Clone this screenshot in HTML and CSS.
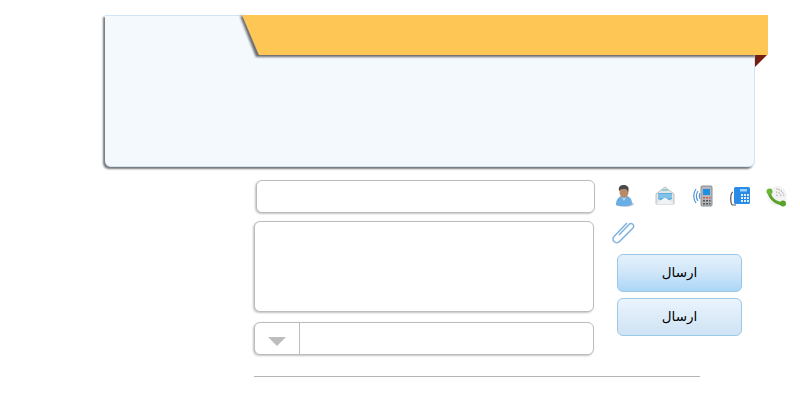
FILE: index.html
```html
<!DOCTYPE html>
<html lang="fa">
<head>
<meta charset="utf-8">
<title>فرم</title>
<link rel="stylesheet" href="styles.css">
</head>
<body>
<div class="page">
  <section class="panel">
    <div class="ribbon-fold"></div>
    <svg class="ribbon" width="526" height="44" viewBox="0 0 526 44">
      <defs><filter id="rs" x="-5%" y="-20%" width="110%" height="150%"><feGaussianBlur stdDeviation="1"/></filter></defs>
      <path d="M-2 1 L14 42 H513 V38 H17 L2 1 Z" fill="#67686b" filter="url(#rs)"/>
      <path d="M0 0 H526 V40 H17 Z" fill="#fec755"/>
    </svg>
  </section>
  <div class="form">
    <div class="fields">
      <input class="field field-text" type="text" aria-label="name">
      <textarea class="field field-area" aria-label="message"></textarea>
      <div class="field field-select">
        <span class="select-btn"><span class="caret"></span></span>
        <span class="select-value"></span>
      </div>
    </div>
    <div class="side">
      <div class="icons">
        <svg width="22" height="24" viewBox="0 0 22 24"><ellipse cx="11" cy="20" rx="9" ry="3" fill="#c9ccd0"/><path d="M2 21c0-6 3-8 5-9l3 2 3-2c3 1 5 3 5 8-2 2-4 2-8 2s-6 0-8-1z" fill="#6aaee6"/><path d="M7 12l3 5 3-5z" fill="#b7d8f3"/><ellipse cx="10" cy="8" rx="4.500" ry="6" fill="#b98a68"/><path d="M5 7c-1-5 2-6 5-6s6 2 4 7c-1-2-1-3-3-3-3 0-4 0-6 2z" fill="#4a4a4a"/></svg>
        <svg class="icon-2" width="22" height="24" viewBox="0 0 22 24"><path d="M2 10 L11 3 L20 10 V20 H2Z" fill="#e3e6e8" stroke="#bcc0c4"/><path d="M4 9h14v6l-7 3-7-3z" fill="#5fb0dd"/><path d="M4 11h14M4 13h14" stroke="#a6d5ee"/><path d="M2 20l8-6h2l8 6z" fill="#f1f2f3"/><path d="M8 5h6v2H8z" fill="#9cc"/></svg>
        <svg class="icon-3" width="22" height="24" viewBox="0 0 22 24"><path d="M5 7c-2 3-2 7 0 10M3 5c-3 4-3 10 0 14M7 9c-1 2-1 4 0 6" fill="none" stroke="#4f97d6" stroke-width="1.200"/><rect x="8" y="2" width="11" height="20" rx="1" fill="#b4b7ba" stroke="#8d9094"/><rect x="10" y="5" width="7" height="6" fill="#1f8fe0"/><path d="M10 13h2v1.500h-2zM13 13h2v1.500h-2zM16 13h1.500v1.500H16z" fill="#d55"/><path d="M10 16h2v1.500h-2zM13 16h2v1.500h-2zM16 16h1.500v1.500H16zM10 19h2v1.500h-2zM13 19h2v1.500h-2zM16 19h1.500v1.500H16z" fill="#555"/></svg>
        <svg class="icon-4" width="22" height="24" viewBox="0 0 22 24"><path d="M4 8c-3 1-3 13 0 13" fill="none" stroke="#555" stroke-width="1.200"/><path d="M4 21h3" stroke="#555"/><rect x="5" y="3" width="16" height="17" rx="1.500" fill="#2a8be8"/><rect x="11" y="5" width="7" height="2.500" fill="#9fd2f8"/><path d="M12 10h2v2h-2zM15 10h2v2h-2zM18 10h2v2h-2zM12 13h2v2h-2zM15 13h2v2h-2zM18 13h2v2h-2zM12 16h2v2h-2zM15 16h2v2h-2zM18 16h2v2h-2z" fill="#dff0fd"/></svg>
        <svg class="icon-5" width="22" height="24" viewBox="0 0 22 24"><circle cx="12" cy="12" r="10" fill="#f3f3f3"/><path d="M11 5a8 8 0 0 1 8 8M11 8a5 5 0 0 1 5 5M11 11a2 2 0 0 1 2 2" fill="none" stroke="#b0b0b0" stroke-width="1.100" stroke-dasharray="1.500 1"/><path d="M4 8C5 14 10 19 18 20" fill="none" stroke="#5aa32a" stroke-width="3"/><circle cx="4.500" cy="7.500" r="3" fill="#6db536"/><circle cx="18" cy="19.500" r="3" fill="#5aa32a"/></svg>
      </div>
      <svg class="clip" width="24" height="24" viewBox="0 0 24 24"><path d="M7 15 L17 4.500 a2.600 2.600 0 0 1 4 3.500 L7.500 21.500 a3.700 3.700 0 0 1 -5.500 -5 L15 3" fill="none" stroke="#7db2df" stroke-width="1.500"/></svg>
      <button class="btn btn-primary" type="button">ارسال</button>
      <button class="btn btn-secondary" type="button">ارسال</button>
    </div>
  </div>
  <div class="rule"></div>
</div>
</body>
</html>
```
FILE: styles.css
```css
html, body { margin: 0; background: #fff; }
body { width: 800px; height: 400px; overflow: hidden; font-family: "DejaVu Sans", "Noto Sans", sans-serif; }
.page { padding: 15px 0 0 105px; }

.panel {
  position: relative;
  box-sizing: border-box;
  width: 650px;
  height: 152px;
  background: #f4f9fe;
  border: 1px solid #d2e4f3;
  border-left: 0;
  border-radius: 0 0 6px 6px;
  box-shadow: -2px 2px 2px #77797c;
}
.ribbon { position: absolute; top: -1px; left: 137px; overflow: visible; }
.ribbon-fold {
  position: absolute;
  top: 39px;
  right: -13px;
  width: 0;
  height: 0;
  border-top: 12px solid #761f10;
  border-right: 12px solid transparent;
}

.form { display: flex; margin: 13px 0 0 149px; }
.fields { display: flex; flex-direction: column; width: 340px; }
.field {
  display: block;
  box-sizing: border-box;
  background: #fff;
  border: 1px solid #bcbcbc;
  border-radius: 6px;
  box-shadow: -1px 1px 2px #c4c4c4;
  padding: 0;
  margin: 0;
  outline: 0;
}
.field-text { width: 339px; height: 33px; margin-left: 2px; }
.field-area { width: 340px; height: 91px; margin-top: 8px; resize: none; }
.field-select { display: flex; width: 340px; height: 33px; margin-top: 10px; }
.select-btn { display: flex; align-items: center; justify-content: center; width: 44px; border-right: 1px solid #bcbcbc; }
.caret { margin-top: 5px; border-top: 9px solid #bdbdbd; border-left: 9px solid transparent; border-right: 9px solid transparent; }
.select-value { flex: 1; }

.side { display: flex; flex-direction: column; align-items: flex-start; margin-left: 17px; }
.icons { display: flex; margin: 4px 0 0 3px; width: 190px; }
.icons svg { flex: none; }
.icon-2 { margin-left: 18px; }
.icon-3 { margin-left: 17px; }
.icon-4 { margin-left: 14px; }
.icon-5 { margin-left: 14px; }
.clip { margin: 12px 0 1px 1px; }
.btn {
  display: block;
  box-sizing: border-box;
  width: 125px;
  margin-left: 6px;
  padding: 0 0 2px;
  border: 1px solid #9cc8e8;
  border-radius: 6px;
  font: 13.500px "DejaVu Sans", sans-serif;
  color: #000;
}
.btn-primary { height: 38px; margin-top: 9px; background: linear-gradient(#e4f1fc, #d2e7f9 45%, #acd6f7); }
.btn-secondary { height: 38px; margin-top: 6px; background: linear-gradient(#eaf4fd, #dcebf8 50%, #cfe3f5); }

.rule { width: 446px; margin: 21px 0 0 149px; border-top: 1px solid #b4b4b4; }
```
